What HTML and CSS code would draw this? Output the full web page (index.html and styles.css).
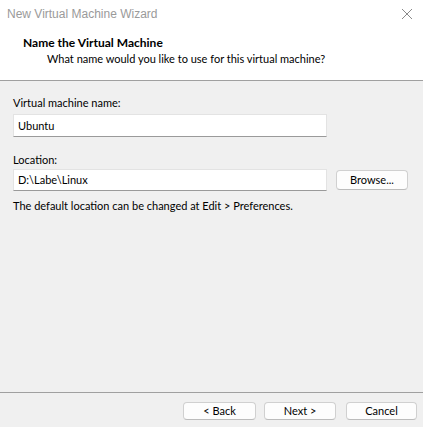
FILE: index.html
```html
<!DOCTYPE html>
<html>
<head>
<meta charset="utf-8">
<link rel="stylesheet" href="styles.css">
</head>
<body>
<div class="window">
  <div class="header">
    <div class="titlebar">
      <span class="title">New Virtual Machine Wizard</span>
      <svg class="close" width="12" height="12" viewBox="0 0 12 12"><path d="M1 1 L11 11 M11 1 L1 11" stroke="#8a8a8a" stroke-width="1" fill="none"/></svg>
    </div>
    <div class="heading">Name the Virtual Machine</div>
    <div class="subheading">What name would you like to use for this virtual machine?</div>
  </div>
  <div class="content">
    <div class="label first">Virtual machine name:</div>
    <div class="row">
      <div class="input wide">Ubuntu</div>
    </div>
    <div class="label second">Location:</div>
    <div class="row">
      <div class="input wide loc">D:\Labe\Linux</div>
      <div class="btn browse">Browse...</div>
    </div>
    <div class="help">The default location can be changed at Edit &gt; Preferences.</div>
  </div>
  <div class="footer">
    <div class="btn back">&lt; Back</div>
    <div class="btn next">Next &gt;</div>
    <div class="btn cancel">Cancel</div>
  </div>
</div>
</body>
</html>
```
FILE: styles.css
```css
html, body { margin: 0; padding: 0; }
body { width: 423px; height: 427px; overflow: hidden; }
.window {
  width: 423px; height: 427px;
  background: #f0f0f0;
  display: flex; flex-direction: column;
  font-family: Lato, "Liberation Sans", Arial, sans-serif;
  font-size: 11px;
  color: #000;
}
.header {
  background: #fff;
  height: 80px;
  border-bottom: 1px solid #a0a0a0;
  flex: none;
}
.titlebar {
  height: 28px;
  display: flex; align-items: center; justify-content: space-between;
  padding: 0 10px 0 7px;
}
.title { color: #9a9a9a; font-size: 12px; font-family: "Liberation Sans", Arial, sans-serif; }
.heading {
  font-weight: bold;
  font-size: 12px;
  margin: 8px 0 0 23px;
  line-height: 14px;
}
.subheading {
  margin: 2px 0 0 47px;
  line-height: 14px;
}
.content {
  padding: 15px 13px 0 13px;
  flex: 1;
}
.label { line-height: 14px; }
.label.first { margin-bottom: 4px; }
.label.second { margin-top: 16px; margin-bottom: 2px; }
.row { display: flex; align-items: center; gap: 9px; }
.input {
  box-sizing: border-box;
  width: 314px; height: 23px;
  background: #fff;
  border: 1px solid #e3e3e3;
  border-bottom-color: #9a9a9a;
  padding: 0 4px;
  line-height: 21px;
}
.input.loc { height: 22px; line-height: 20px; }
.btn {
  box-sizing: border-box;
  width: 72px; height: 18px;
  background: #fdfdfd;
  border: 1px solid #d0d0d0;
  border-bottom-color: #bcbcbc;
  border-radius: 4px;
  text-align: center;
  line-height: 16px;
}
.browse { height: 20px; line-height: 18px; }
.help { margin-top: 8px; line-height: 14px; }
.footer {
  flex: none;
  border-top: 1px solid #a0a0a0;
  height: 35px;
  box-sizing: border-box;
  display: flex; justify-content: flex-end;
  padding: 9px 6px 0 0;
}
.footer .back { width: 73px; margin-right: 8px; }
.footer .next { width: 72px; margin-right: 10px; }
.footer .cancel { width: 71px; }
```
